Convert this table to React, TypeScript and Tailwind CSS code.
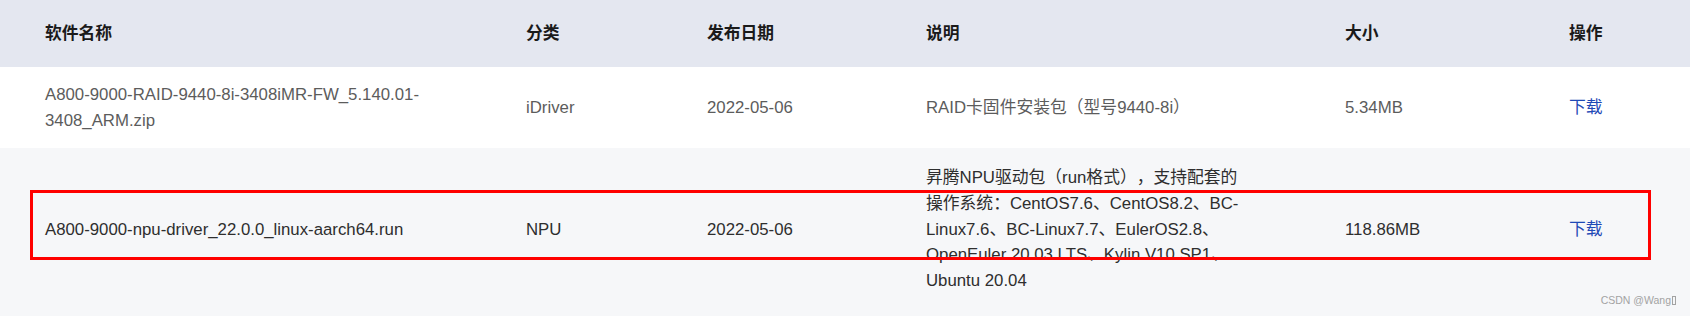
import React from "react";

const font = "font-['Liberation_Sans','Noto_Sans_CJK_SC',sans-serif]";

function Row({
  name,
  cat,
  date,
  desc,
  size,
  rowClass,
  textClass,
}: {
  name: string;
  cat: string;
  date: string;
  desc: string;
  size: string;
  rowClass: string;
  textClass: string;
}) {
  return (
    <div className={`flex items-center pl-[45px] ${rowClass} ${textClass}`}>
      <div className="w-[481px] shrink-0 pr-[60px]">{name}</div>
      <div className="w-[181px] shrink-0">{cat}</div>
      <div className="w-[219px] shrink-0">{date}</div>
      <div className="w-[419px] shrink-0 pr-[99px]">{desc}</div>
      <div className="w-[224px] shrink-0">{size}</div>
      <div className="flex-1">
        <a className="text-[#1f49b6] cursor-pointer">下载</a>
      </div>
    </div>
  );
}

export default function App() {
  return (
    <div
      className={`relative w-[1690px] h-[316px] overflow-hidden bg-white text-[16.8px] leading-[25.8px] [text-spacing-trim:space-all] ${font}`}
    >
      <div className="flex items-center h-[67px] bg-[#e4e7f0] pl-[45px] font-bold text-[#1a1a1a]">
        <div className="w-[481px] shrink-0">软件名称</div>
        <div className="w-[181px] shrink-0">分类</div>
        <div className="w-[219px] shrink-0">发布日期</div>
        <div className="w-[419px] shrink-0">说明</div>
        <div className="w-[224px] shrink-0">大小</div>
        <div className="flex-1">操作</div>
      </div>
      <Row
        name="A800-9000-RAID-9440-8i-3408iMR-FW_5.140.01-3408_ARM.zip"
        cat="iDriver"
        date="2022-05-06"
        desc="RAID卡固件安装包（型号9440-8i）"
        size="5.34MB"
        rowClass="h-[81px] bg-white"
        textClass="text-[#5c5c5c]"
      />
      <Row
        name="A800-9000-npu-driver_22.0.0_linux-aarch64.run"
        cat="NPU"
        date="2022-05-06"
        desc="昇腾NPU驱动包（run格式），支持配套的操作系统：CentOS7.6、CentOS8.2、BC-Linux7.6、BC-Linux7.7、EulerOS2.8、OpenEuler 20.03 LTS、Kylin V10 SP1、Ubuntu 20.04"
        size="118.86MB"
        rowClass="pt-[17px] pb-[22px] bg-[#f6f7f9]"
        textClass="text-[#2e2e2e]"
      />
      <div className="absolute left-[30px] top-[190px] w-[1621px] h-[70px] border-[3px] border-[#ff0000] pointer-events-none" />
      <div className="absolute right-[14px] top-[293px] flex items-center text-[10.5px] leading-[14px] text-[#a3a3a3]">
        <span>CSDN @Wang</span>
        <span className="ml-[1px] inline-block w-[4px] h-[9px] border border-[#a3a3a3]" />
      </div>
    </div>
  );
}
